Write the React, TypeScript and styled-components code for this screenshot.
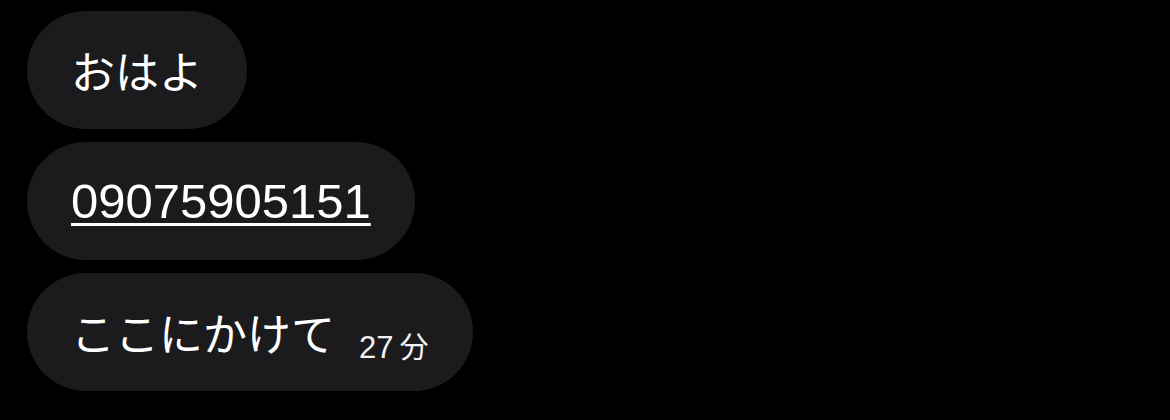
import React from "react";
import styled, { createGlobalStyle } from "styled-components";

interface Message {
  id: number;
  text: string;
  kind?: "text" | "phone";
  minutesAgo?: number;
}

const messages: Message[] = [
  { id: 1, text: "おはよ" },
  { id: 2, text: "09075905151", kind: "phone" },
  { id: 3, text: "ここにかけて", minutesAgo: 27 },
];

const App: React.FC = () => {
  return (
    <>
      <GlobalStyle />
      <Thread>
        {messages.map((msg) => (
          <Bubble key={msg.id}>
            {msg.kind === "phone" ? (
              <PhoneLink href={`tel:${msg.text}`}>{msg.text}</PhoneLink>
            ) : (
              <BubbleText>{msg.text}</BubbleText>
            )}
            {msg.minutesAgo !== undefined && (
              <Timestamp>
                {msg.minutesAgo}
                <TimeUnit>分</TimeUnit>
              </Timestamp>
            )}
          </Bubble>
        ))}
      </Thread>
    </>
  );
};

export default App;

const GlobalStyle = createGlobalStyle`
  html, body {
    margin: 0;
    padding: 0;
    background: #000;
  }

  body {
    width: 1170px;
    height: 420px;
    overflow: hidden;
    font-family: "Liberation Sans", "Noto Sans CJK JP", sans-serif;
    color: #fff;
  }
`;

const Thread = styled.div`
  display: flex;
  flex-direction: column;
  align-items: flex-start;
  gap: 13px;
  padding: 11px 0 0 27px;
`;

const Bubble = styled.div`
  display: flex;
  align-items: center;
  gap: 24px;
  height: 118px;
  padding: 0 44px;
  box-sizing: border-box;
  border-radius: 59px;
  background: #1b1b1d;
`;

const BubbleText = styled.span`
  font-family: "Noto Sans CJK JP", sans-serif;
  font-size: 44px;
  line-height: 1;
  color: #fff;
`;

const PhoneLink = styled.a`
  font-family: "Liberation Sans", sans-serif;
  font-size: 49px;
  line-height: 1;
  color: #fff;
  text-decoration: underline;
  text-decoration-thickness: 3px;
  text-underline-offset: 5px;
`;

const Timestamp = styled.span`
  display: flex;
  align-items: baseline;
  align-self: flex-end;
  margin-bottom: 28px;
  font-family: "Liberation Sans", sans-serif;
  font-size: 31px;
  line-height: 1;
  color: #f2f2f2;
`;

const TimeUnit = styled.span`
  margin-left: 6px;
  font-family: "Noto Sans CJK JP", sans-serif;
  font-size: 29px;
`;
